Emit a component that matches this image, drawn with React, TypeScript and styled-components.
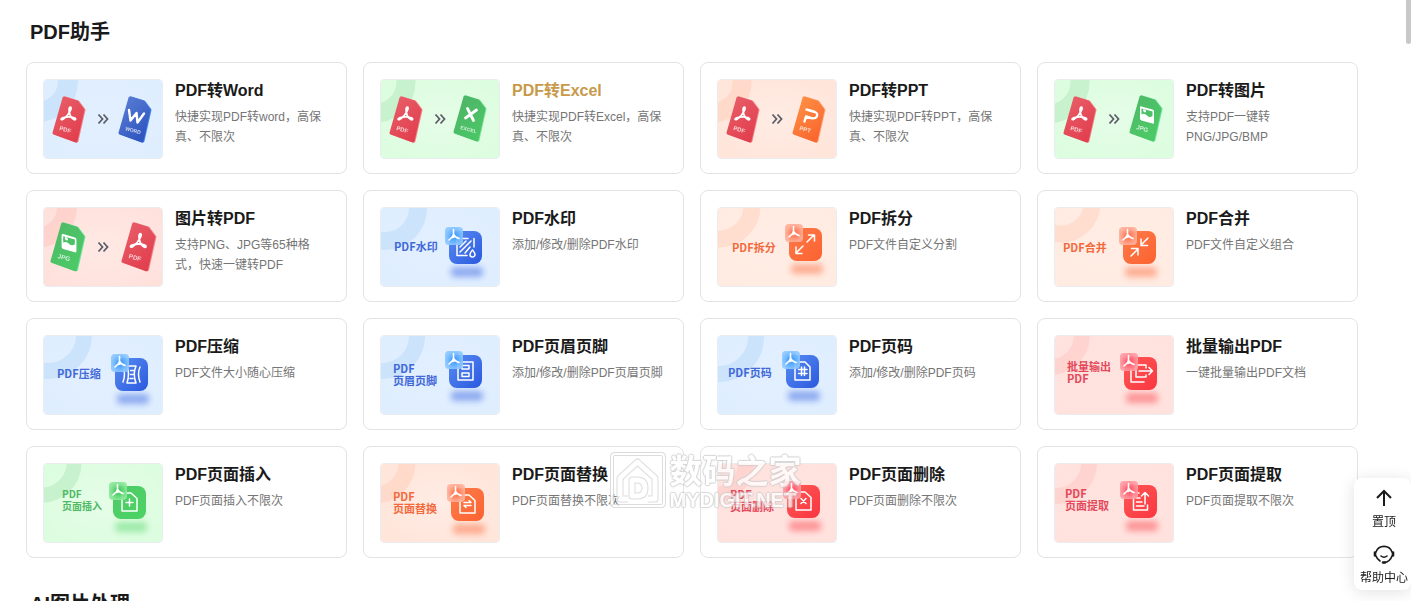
import React from "react";
import styled, { createGlobalStyle } from "styled-components";

const latin = `"Liberation Sans", "Noto Sans CJK SC", sans-serif`;
const cjk = `"Noto Sans CJK SC", sans-serif`;

const GlobalStyle = createGlobalStyle`
  *, *::before, *::after { box-sizing: border-box; }
  body { margin: 0; background: #fff; font-family: ${latin}; color: #1a1a1a; }
`;

const Page = styled.main`
  position: relative;
  height: 100vh;
  overflow: hidden;
  padding: 18px 53px 0 26px;
`;

const Section = styled.section`
  margin-bottom: 32px;
`;

const SectionTitle = styled.h2`
  margin: 0 4px 16px;
  font-size: 20px;
  line-height: 28px;
  font-weight: 700;
`;

const Grid = styled.div`
  display: grid;
  grid-template-columns: repeat(4, minmax(0, 1fr));
  gap: 16px;
`;

const Card = styled.a`
  display: flex;
  gap: 12px;
  padding: 16px 16px 14px;
  border: 1px solid #e3e3e3;
  border-radius: 8px;
  background: #fff;
  text-decoration: none;
  color: inherit;
`;

const Thumb = styled.div`
  flex: none;
  width: 120px;
  height: 80px;
  border: 1px solid #e9edf0;
  border-radius: 4px;
  overflow: hidden;

  svg { display: block; width: 100%; height: 100%; }
`;

const CardText = styled.div`
  flex: 1;
  min-width: 0;
`;

const CardTitle = styled.h3<{ $active?: boolean }>`
  margin: 0 0 4px;
  font-size: 16px;
  line-height: 24px;
  font-weight: 700;
  color: ${(p) => (p.$active ? "#c79a4b" : "#1a1a1a")};
`;

const CardDesc = styled.p`
  margin: 0;
  font-size: 12px;
  line-height: 20px;
  color: #757575;
`;

const SideBar = styled.aside`
  position: fixed;
  right: 0;
  bottom: 11px;
  display: flex;
  flex-direction: column;
  gap: 12px;
  padding: 10px 3px 2px 6px;
  border-radius: 8px;
  background: #fff;
  box-shadow: 0 2px 16px rgba(0, 0, 0, 0.12);
`;

const SideButton = styled.button`
  display: flex;
  flex-direction: column;
  align-items: center;
  gap: 4px;
  padding: 0;
  border: 0;
  background: none;
  color: #1a1a1a;
  font-family: ${latin};
  font-size: 12px;
  line-height: 20px;
  white-space: nowrap;
`;

const ScrollThumb = styled.div`
  position: absolute;
  top: 0;
  right: 0;
  width: 5px;
  height: 44px;
  border-radius: 0 0 3px 3px;
  background: #c8c8c8;
`;

const Stamp = styled.div`
  position: fixed;
  left: 0;
  right: 0;
  bottom: 88px;
  display: flex;
  justify-content: center;
  gap: 4px;
  opacity: 0.75;
  pointer-events: none;
  color: #fff;
  font-weight: 700;
  text-shadow: 0 0 2px #c4c4c4, 1px 0 1px #ccc, -1px 0 1px #ccc, 0 1px 1px #ccc, 0 -1px 1px #ccc;
`;

const StampWords = styled.div`
  display: flex;
  flex-direction: column;
`;

const StampName = styled.span`
  font-family: ${cjk};
  font-size: 33px;
  line-height: 36px;
`;

const StampSite = styled.span`
  font-size: 20px;
  line-height: 26px;
`;

type Tone = "blue" | "green" | "peach" | "orange" | "pink" | "red";

const tones: Record<Tone, { bg: string; glow: string; ring: string; from: string; to: string; badge: string; badgeMid: string; text: string }> = {
  blue: { bg: "#dfeeff", glow: "#e2efff", ring: "#c9e1fb", from: "#5a8df2", to: "#2a59de", badge: "#8cc8ff", badgeMid: "#3b9bff", text: "#4068d8" },
  green: { bg: "#dcfddf", glow: "#e6fde8", ring: "#c5efcb", from: "#4fcb68", to: "#4cd364", badge: "#8ce89b", badgeMid: "#3fc65b", text: "#4fb964" },
  peach: { bg: "#ffe5da", glow: "#ffece4", ring: "#ffd8c8", from: "#ff7d4c", to: "#fb6230", badge: "#ffb39b", badgeMid: "#ff6d48", text: "#f2693c" },
  orange: { bg: "#ffebe1", glow: "#ffede5", ring: "#ffdccd", from: "#ff7a4a", to: "#fb6230", badge: "#ffb09a", badgeMid: "#ff6f4d", text: "#f2693c" },
  pink: { bg: "#ffe1dc", glow: "#ffe9e4", ring: "#ffd2cb", from: "#ff5a55", to: "#f93540", badge: "#ff9ca4", badgeMid: "#ff5063", text: "#e4485a" },
  red: { bg: "#ffe2de", glow: "#ffe3df", ring: "#ffd3ce", from: "#ff5a55", to: "#f93540", badge: "#ff9ca4", badgeMid: "#ff5063", text: "#e4485a" },
};

type Ring = [cx: number, cy: number, r: number, w: number];

function Acrobat() {
  return (
    <path
      d="M8 1.5C6.7 1.5 7 4 8 6.3 9.2 9 11.400 11 13.500 11.500 15 11.700 15 10.200 13.300 9.900 10.500 9.500 6 10.400 3.200 12 1.300 13.200 2.300 14.600 3.800 13.200 6 11 8 7 8.600 4 8.900 2.300 8.700 1.500 8 1.500Z"
      fill="none"
      stroke="#fff"
      strokeWidth="1.500"
      strokeLinejoin="round"
    />
  );
}

type DocKind = "PDF" | "WORD" | "EXCEL" | "PPT" | "JPG";

const docColors: Record<DocKind, [string, string, string]> = {
  PDF: ["#e8606a", "#e2404f", "#f0888c"],
  WORD: ["#5b7fd6", "#3157c0", "#3f86f0"],
  EXCEL: ["#4fb368", "#4bc566", "#7fe39a"],
  PPT: ["#ff9447", "#f9682f", "#ffa882"],
  JPG: ["#4fb968", "#4cc966", "#6fe5a0"],
};

function DocMark({ kind }: { kind: DocKind }) {
  const stroke = { fill: "none", stroke: "#fff", strokeWidth: 2.4, strokeLinecap: "round" as const, strokeLinejoin: "round" as const };
  switch (kind) {
    case "PDF":
      return <g transform="translate(7 9) rotate(12 8 8) scale(1.15)"><Acrobat /></g>;
    case "WORD":
      return <path d="M10 14L11.500 24.500 17.500 17 18.500 26.500 25 17.500" {...stroke} />;
    case "EXCEL":
      return <path d="M13.500 13.500L19.500 25.500M22.500 15L11.500 23" {...stroke} strokeWidth={2.8} />;
    case "PPT":
      return <path d="M13.500 13.500L22 16Q25.500 17.500 23.500 21 22 23 18 22L13 20.500 11.500 25.500" {...stroke} />;
    case "JPG":
      return (
        <g transform="translate(10 10) skewY(16)">
          <rect x="0" y="1" width="14" height="14" rx="1.500" fill="#fff" />
          <path d="M1.500 9Q4.500 6.500 7 8.500T12.500 7.500V3H1.500Z" fill="#4dc167" />
          <circle cx="4.500" cy="4.500" r="1.500" fill="#fff" />
        </g>
      );
  }
}

function Doc({ kind, x, y, scale = 1, id }: { kind: DocKind; x: number; y: number; scale?: number; id: string }) {
  const [from, to, edge] = docColors[kind];
  const shape = "M11 2L24 6 30 14 23 45 1 37Z";
  return (
    <g transform={`translate(${x} ${y}) scale(${scale})`}>
      <linearGradient id={id} x1="0" y1="0" x2="0.6" y2="1">
        <stop offset="0" stopColor={from} />
        <stop offset="1" stopColor={to} />
      </linearGradient>
      <path d={shape} transform="translate(1 0)" fill={edge} stroke={edge} strokeWidth="3" strokeLinejoin="round" />
      <path d={shape} fill={`url(#${id})`} stroke={`url(#${id})`} strokeWidth="3" strokeLinejoin="round" />
      <DocMark kind={kind} />
      <text
        x="0"
        y="0"
        transform="translate(6 34) rotate(15)"
        fontFamily="Liberation Sans, sans-serif"
        fontSize={kind.length > 3 ? 5 : 6}
        fontWeight="700"
        fill="#fff"
        opacity="0.75"
      >
        {kind}
      </text>
    </g>
  );
}

type GlyphName = "watermark" | "split" | "merge" | "compress" | "header" | "number" | "batch" | "insert" | "replace" | "remove" | "extract";

const glyphs: Record<GlyphName, string> = {
  watermark: "M19 7.500H8V24.500H18M25 7.500V16M11 16L17 10M11 21L22 10M16 22L21 16M23.500 19C22 21 21 22 21 23.500A2.500 2.500 0 0 0 26 23.500C26 22 25 21 23.500 19Z",
  split: "M18 14L25 7M19.500 7H25.500V13M14 18L7 25M7 19V25.500H13",
  merge: "M25 7L18 14M18 8V14.500H24.500M8 25L15 18M8.500 17.500H15V24",
  compress: "M12 8H21Q17.500 16 21 25H12Q15 16 12 8ZM15.500 12.500H18.500M15.500 16.500H18.500M15 20.500H18M8 9Q11 16 8 24M25 9Q22 16 25 24",
  header: "M9 7H24V25H9ZM13 10.500H20V14H13ZM13 18H20V21.500H13Z",
  number: "M9 7H19L24 12V25H9ZM15.500 12V20.500M18.500 12V20.500M12.500 14.500H21M12.500 18.500H21",
  batch: "M12 12V8H22V11M12 11V20H22V18M15 14H28M25 10.500L28.500 14 25 17.500M7 12V25H20",
  insert: "M9 7H18L24 12.500V25H9ZM16.500 13V20M13 16.500H20",
  replace: "M9 7H18L24 12.500V25H9ZM13 14.500H20L18 12.500M20 17.500H13L15 19.500",
  remove: "M9 7H18L24 12.500V25H9ZM14 13.500L19 18.500M19 13.500L14 18.500",
  extract: "M15 8H9.500V25H23.500V20M21 19V8M17.500 11L21 7.500 24.500 11M12.500 13H16M12.500 17H18M12.500 21H20",
};

function AppIcon({ tone, glyph, x, y, id }: { tone: Tone; glyph: GlyphName; x: number; y: number; id: string }) {
  const t = tones[tone];
  return (
    <g transform={`translate(${x} ${y})`}>
      <defs>
        <linearGradient id={`${id}-tile`} x1="0" y1="0" x2="1" y2="1">
          <stop offset="0" stopColor={t.from} />
          <stop offset="1" stopColor={t.to} />
        </linearGradient>
        <radialGradient id={`${id}-badge`}>
          <stop offset="0.1" stopColor={t.badgeMid} />
          <stop offset="1" stopColor={t.badge} />
        </radialGradient>
        <filter id={`${id}-soft`} x="-30%" y="-80%" width="160%" height="260%">
          <feGaussianBlur stdDeviation="3" />
        </filter>
      </defs>
      <rect x="2" y="36" width="32" height="10" rx="4" fill={t.to} opacity="0.45" filter={`url(#${id}-soft)`} />
      <rect width="33" height="33" rx="8" fill={`url(#${id}-tile)`} />
      <path d={glyphs[glyph]} fill="none" stroke="#fff" strokeWidth="1.500" strokeLinecap="round" strokeLinejoin="round" />
      <rect x="-4" y="-4" width="18" height="18" rx="4" fill={`url(#${id}-badge)`} opacity="0.92" />
      <path d="M4.500 -1.500V2.500Q4.500 4 3.500 5.500L0 9M4.500 3Q6 6.500 10 7.500M3.500 6.500L6.500 5.500" fill="none" stroke="#fff" strokeWidth="1.600" strokeLinecap="round" />
    </g>
  );
}

type Art =
  | { type: "convert"; from: DocKind; to: DocKind; dx?: number; dy?: number; large?: boolean }
  | { type: "tool"; glyph: GlyphName; lines: string[]; textX: number; textY: number; size?: number; x: number; y: number };

interface Tool {
  title: string;
  desc: string;
  tone: Tone;
  ring: Ring;
  art: Art;
  active?: boolean;
}

const tools: Tool[] = [
  { title: "PDF转Word", desc: "快捷实现PDF转word，高保真、不限次", tone: "blue", ring: [-6, 2, 31, 20], art: { type: "convert", from: "PDF", to: "WORD" } },
  { title: "PDF转Excel", desc: "快捷实现PDF转Excel，高保真、不限次", tone: "green", ring: [-5, 3, 31, 19], active: true, art: { type: "convert", from: "PDF", to: "EXCEL", dx: 64, dy: -1 } },
  { title: "PDF转PPT", desc: "快捷实现PDF转PPT，高保真、不限次", tone: "peach", ring: [-6, 3, 31, 19], art: { type: "convert", from: "PDF", to: "PPT" } },
  { title: "PDF转图片", desc: "支持PDF一键转PNG/JPG/BMP", tone: "green", ring: [-6, 3, 32, 19], art: { type: "convert", from: "PDF", to: "JPG", dy: -1 } },
  { title: "图片转PDF", desc: "支持PNG、JPG等65种格式，快速一键转PDF", tone: "pink", ring: [-7, 0, 31, 20], art: { type: "convert", from: "JPG", to: "PDF", large: true, dx: 71 } },
  { title: "PDF水印", desc: "添加/修改/删除PDF水印", tone: "blue", ring: [5, 1, 33, 18], art: { type: "tool", glyph: "watermark", lines: ["PDF水印"], textX: 14, textY: 44, x: 69, y: 24 } },
  { title: "PDF拆分", desc: "PDF文件自定义分割", tone: "orange", ring: [2, -1, 33, 17], art: { type: "tool", glyph: "split", lines: ["PDF拆分"], textX: 15, textY: 45, x: 72, y: 21 } },
  { title: "PDF合并", desc: "PDF文件自定义组合", tone: "orange", ring: [7, -4, 31, 17], art: { type: "tool", glyph: "merge", lines: ["PDF合并"], textX: 9, textY: 45, x: 69, y: 24 } },
  { title: "PDF压缩", desc: "PDF文件大小随心压缩", tone: "blue", ring: [5, 0, 36, 16], art: { type: "tool", glyph: "compress", lines: ["PDF压缩"], textX: 14, textY: 43, x: 72, y: 23 } },
  { title: "PDF页眉页脚", desc: "添加/修改/删除PDF页眉页脚", tone: "blue", ring: [2, 1, 35, 16], art: { type: "tool", glyph: "header", lines: ["PDF", "页眉页脚"], textX: 13, textY: 38, x: 69, y: 20 } },
  { title: "PDF页码", desc: "添加/修改/删除PDF页码", tone: "blue", ring: [2, 2, 37, 16], art: { type: "tool", glyph: "number", lines: ["PDF页码"], textX: 11, textY: 42, x: 69, y: 20 } },
  { title: "批量输出PDF", desc: "一键批量输出PDF文档", tone: "red", ring: [-4, 0, 32, 16], art: { type: "tool", glyph: "batch", lines: ["批量输出", "PDF"], textX: 13, textY: 36, x: 70, y: 22 } },
  { title: "PDF页面插入", desc: "PDF页面插入不限次", tone: "green", ring: [-1, 0, 32, 15], art: { type: "tool", glyph: "insert", lines: ["PDF", "页面插入"], textX: 19, textY: 35, size: 10, x: 70, y: 23 } },
  { title: "PDF页面替换", desc: "PDF页面替换不限次", tone: "peach", ring: [-5, 0, 32, 17], art: { type: "tool", glyph: "replace", lines: ["PDF", "页面替换"], textX: 13, textY: 38, x: 71, y: 25 } },
  { title: "PDF页面删除", desc: "PDF页面删除不限次", tone: "red", ring: [-3, 0, 32, 16], art: { type: "tool", glyph: "remove", lines: ["PDF", "页面删除"], textX: 13, textY: 36, x: 70, y: 22 } },
  { title: "PDF页面提取", desc: "PDF页面提取不限次", tone: "red", ring: [2, 0, 33, 16], art: { type: "tool", glyph: "extract", lines: ["PDF", "页面提取"], textX: 11, textY: 35, x: 70, y: 22 } },
];

function ToolArt({ tool, id }: { tool: Tool; id: string }) {
  const { art, ring, tone } = tool;
  const t = tones[tone];
  return (
    <svg viewBox="1 1 118 78" aria-hidden="true">
      <radialGradient id={`${id}-bg`} cx="0.5" cy="0.5" r="0.6">
        <stop offset="0" stopColor={t.glow} />
        <stop offset="1" stopColor={t.bg} />
      </radialGradient>
      <rect width="120" height="80" fill={`url(#${id}-bg)`} />
      <circle cx={ring[0]} cy={ring[1]} r={ring[2]} fill="none" stroke={t.ring} strokeWidth={ring[3]} opacity="0.9" />
      {art.type === "convert" ? (
        <>
          <Doc kind={art.from} x={art.large ? 8 : 10} y={art.large ? 15 : 17} scale={art.large ? 1.06 : 1} id={`${id}-a`} />
          <path d="M55.500 35.500L59.500 40 55.500 44.500M60.500 35.500L64.500 40 60.500 44.500" fill="none" stroke="#5c5f68" strokeWidth="1.800" />
          <Doc
            kind={art.to}
            x={(art.large ? 8 : 10) + (art.dx ?? 66)}
            y={(art.large ? 15 : 17) + (art.dy ?? 0)}
            scale={art.large ? 1.06 : 1}
            id={`${id}-b`}
          />
        </>
      ) : (
        <>
          <text fontFamily="Noto Sans CJK SC, sans-serif" fontSize={art.size ?? 11} fontWeight="700" fill={t.text}>
            {art.lines.map((line, i) => (
              <tspan key={line} x={art.textX} y={art.textY + i * 12}>
                {line}
              </tspan>
            ))}
          </text>
          <AppIcon tone={tone} glyph={art.glyph} x={art.x} y={art.y} id={`${id}-i`} />
        </>
      )}
    </svg>
  );
}

function StampLogo() {
  const frame = "M5 2H51Q54 2 54 5V51Q54 54 51 54H5Q2 54 2 51V5Q2 2 5 2Z";
  const house = "M18 47H10V26L27.500 10 45 26V47H38";
  const letter = "M22 28H27Q35 28 35 36T27 44H22Z";
  return (
    <svg width="56" height="58" viewBox="0 0 56 56" fill="none" strokeLinejoin="round" aria-hidden="true">
      <g stroke="#d0d0d0">
        <path d={frame} strokeWidth="4" />
        <path d={house} strokeWidth="7" />
        <path d={letter} strokeWidth="7" />
      </g>
      <g stroke="#fff">
        <path d={frame} strokeWidth="2" />
        <path d={house} strokeWidth="5" />
        <path d={letter} strokeWidth="5" />
      </g>
    </svg>
  );
}

export default function App() {
  return (
    <>
      <GlobalStyle />
      <Page>
        <Section>
          <SectionTitle>PDF助手</SectionTitle>
          <Grid>
            {tools.map((tool, i) => (
              <Card key={tool.title} href="#">
                <Thumb>
                  <ToolArt tool={tool} id={`tool${i}`} />
                </Thumb>
                <CardText>
                  <CardTitle $active={tool.active}>{tool.title}</CardTitle>
                  <CardDesc>{tool.desc}</CardDesc>
                </CardText>
              </Card>
            ))}
          </Grid>
        </Section>
        <Section>
          <SectionTitle>AI图片处理</SectionTitle>
        </Section>
        <ScrollThumb />
      </Page>
      <Stamp>
        <StampLogo />
        <StampWords>
          <StampName>数码之家</StampName>
          <StampSite>MYDIGIT.NET</StampSite>
        </StampWords>
      </Stamp>
      <SideBar>
        <SideButton type="button">
          <svg width="22" height="20" viewBox="0 0 22 20" fill="none" stroke="currentColor" strokeWidth="2" aria-hidden="true">
            <path d="M11 18V3M4 10L11 3 18 10" />
          </svg>
          置顶
        </SideButton>
        <SideButton type="button">
          <svg width="22" height="20" viewBox="0 0 22 20" fill="none" stroke="currentColor" strokeWidth="2" strokeLinecap="round" aria-hidden="true">
            <path d="M3 8A8.500 8.500 0 0 1 19 8M3 12Q4 15 7 17M19 12Q17 18 11 18.500" strokeWidth="1.600" />
            <path d="M2 8.500V11.500M20 8.500V11.500" strokeWidth="2.600" />
            <path d="M8 12Q11 14.500 14 12" strokeWidth="1.600" />
            <path d="M10 18.500H12" strokeWidth="2.400" />
          </svg>
          帮助中心
        </SideButton>
      </SideBar>
    </>
  );
}
